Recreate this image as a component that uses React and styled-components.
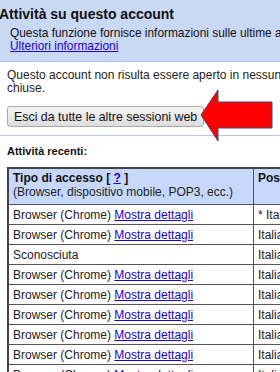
import styled, { createGlobalStyle } from 'styled-components';

const Global = createGlobalStyle`
  html, body {
    margin: 0;
    padding: 0;
    background: #fff;
    overflow: hidden;
  }
  body {
    font-family: "Liberation Sans", Arial, sans-serif;
    color: #222;
  }
`;

const Page = styled.div`
  position: relative;
  width: 640px;
  height: 372px;
  overflow: hidden;
`;

const Banner = styled.div`
  background: #c9d8f5;
  border-bottom: 1px solid #b3c6ec;
  padding: 5px 0 8px 0;
  h2{
    margin: 0 0 0 -1px;
    font-size: 14px;
    font-weight: bold;
    color: #111;
    line-height: 18px;
  }
  p{
    margin: 4px 0 0 10px;
    font-size: 11.9px;
    line-height: 13px;
    color: #111;
  }
`;

const TextLink = styled.a`
  color: #2200cc;
  text-decoration: underline;
  cursor: pointer;
`;

const Body = styled.div`
  padding: 7px 0 0 7px;
`;

const Notice = styled.p`
  margin: 0;
  font-size: 12px;
  line-height: 12.5px;
  color: #222;
`;

const Button = styled.button`
  margin-top: 12px;
  height: 21px;
  padding: 0 6px;
  font-family: "Liberation Sans", Arial, sans-serif;
  font-size: 12.4px;
  color: #111;
  background: linear-gradient(#f6f6f6, #dcdcdc);
  border: 1px solid #a9a9a9;
  border-radius: 3px;
`;

const Divider = styled.div`
  height: 1px;
  background: #b3c6ec;
  margin: 8px 0 0 -7px;
`;

const Label = styled.h3`
  margin: 9px 0 0 0;
  font-size: 11px;
  font-weight: bold;
  line-height: 13px;
  color: #111;
`;

const Table = styled.table`
  margin-top: 9px;
  border-collapse: collapse;
  border: 2px solid #444;
  font-size: 12px;
  color: #222;
  th, td{
    border: 1px solid #555;
    text-align: left;
    padding: 0 4px;
    white-space: nowrap;
  }
  th{
    background: #c6d8fb;
    font-weight: normal;
    height: 33px;
    vertical-align: top;
    padding-top: 2px;
    line-height: 14px;
    b{ color: #111; }
  }
  td{
    height: 19px;
  }
  th:first-child, td:first-child{
    width: 236px;
  }
  th:last-child, td:last-child{
    width: 140px;
  }
`;

const Arrow = styled.svg`
  position: absolute;
  left: 199px;
  top: 88px;
`;

const rows = [
  { type: 'Browser (Chrome)', link: true, place: '* Italia' },
  { type: 'Browser (Chrome)', link: true, place: 'Italia' },
  { type: 'Sconosciuta', link: false, place: 'Italia' },
  { type: 'Browser (Chrome)', link: true, place: 'Italia' },
  { type: 'Browser (Chrome)', link: true, place: 'Italia' },
  { type: 'Browser (Chrome)', link: true, place: 'Italia' },
  { type: 'Browser (Chrome)', link: true, place: 'Italia' },
  { type: 'Browser (Chrome)', link: true, place: 'Italia' },
  { type: 'Browser (Chrome)', link: true, place: 'Italia' },
];

const App = () => {
  return (
    <>
      <Global />
      <Page>
        <Banner>
          <h2>Attività su questo account</h2>
          <p>
            Questa funzione fornisce informazioni sulle ultime attività di questo account.<br />
            <TextLink>Ulteriori informazioni</TextLink>
          </p>
        </Banner>
        <Body>
          <Notice>
            Questo account non risulta essere aperto in nessun'altra posizione. Tutte le sessioni sono<br />
            chiuse.
          </Notice>
          <Button type="button">Esci da tutte le altre sessioni web</Button>
          <Divider />
          <Label>Attività recenti:</Label>
          <Table>
            <thead>
              <tr>
                <th>
                  <b>Tipo di accesso [ <TextLink>?</TextLink> ]</b><br />
                  (Browser, dispositivo mobile, POP3, ecc.)
                </th>
                <th><b>Posizione (indirizzo IP)</b></th>
              </tr>
            </thead>
            <tbody>
              {rows.map((row, i) => (
                <tr key={i}>
                  <td>
                    {row.type}{row.link && <> <TextLink>Mostra dettagli</TextLink></>}
                  </td>
                  <td>{row.place}</td>
                </tr>
              ))}
            </tbody>
          </Table>
        </Body>
        <Arrow width="76" height="56" viewBox="0 0 76 56">
          <polygon
            points="2,27 19,2 19,14 73,14 73,40 19,40 19,53"
            fill="#ff0000"
            stroke="#3b4a78"
            strokeWidth="1"
          />
        </Arrow>
      </Page>
    </>
  );
};

export default App;
